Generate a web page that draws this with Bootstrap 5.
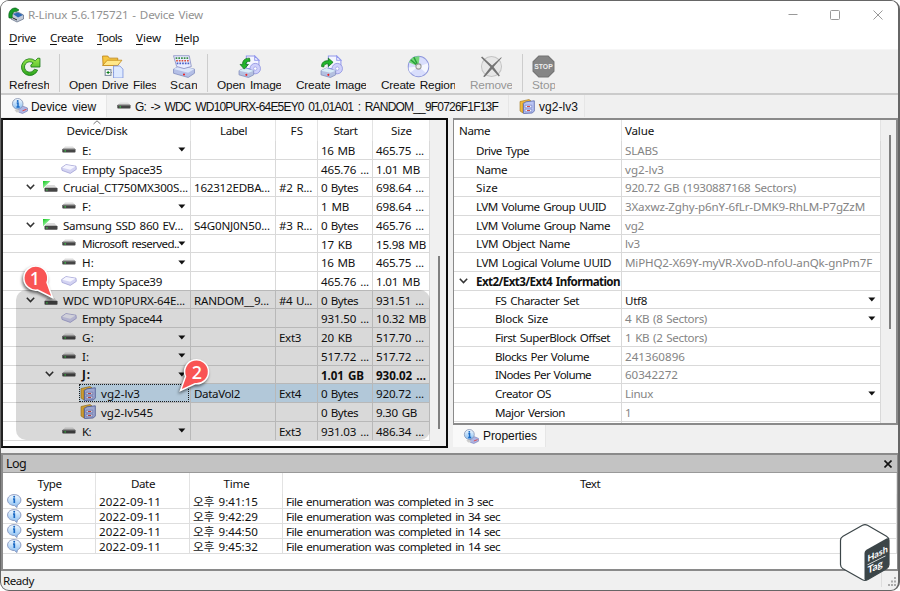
<!DOCTYPE html>
<html lang="en">
<head>
<meta charset="utf-8">
<title>R-Linux 5.6.175721 - Device View</title>
<link href="https://cdn.jsdelivr.net/npm/bootstrap@5.3.0/dist/css/bootstrap.min.css" rel="stylesheet">
<style>
body{width:900px;height:591px;overflow:hidden;background:#fff;font:11.6px/18px "Noto Sans","Noto Sans CJK KR",sans-serif;word-spacing:1.2px;color:#111}
svg{display:block;flex:none}
.t{display:inline-block;white-space:pre}
.win{width:900px;height:591px;border:1px solid #666;border-right-width:2px;border-radius:9px;background:#f0f0f0;overflow:hidden}
.titlebar{height:27px;background:#fff;padding-left:7px;color:#929292}
.titlebar svg.ms-auto{margin-right:7px}
.menus{height:21px;line-height:19px;background:#fff;padding:0 0 2px 8px;color:#111}
.menus u{text-underline-offset:2px}
.tools{height:46px;padding:5px 0 0 8px;border-top:1px solid #f6f6f6;border-bottom:2px solid #cbcbcb;font:11.8px/14px "Liberation Sans",sans-serif;word-spacing:1.5px}
.tool svg{margin:0 auto}
.tool .cap{height:14px;overflow:hidden}
.tool .cap .t{margin-top:-3px}
.vsep{width:1px;height:38px;background:#cdcdcd;margin:-1px 9px 0 10px}
.tabs2{height:23px;padding-bottom:1px;font:12px/20px "Liberation Sans",sans-serif;word-spacing:2px}
.tabs2 .t{padding-top:1px}
.tab2{background:#f2f2f2;border-right:1px solid #e6e6e6}
.tab2.on{background:#f9f9f9}
.mid{height:335px}
.pane-l{width:447px;height:330px;border:2px solid #0a0a0a;border-left-color:#222;background:#fff;position:relative}
.pane-r{width:445px;height:307px;border:2px solid #8a8a8a;border-left-width:1px;background:#fff}
.hd{height:21px;line-height:21px}
.tr2{height:18.72px;line-height:20px}
.tr2>div{border-bottom:1px solid #d9d9d9;border-right:1px solid #d9d9d9;padding-left:3px;overflow:hidden;white-space:nowrap}
.tr2>.align-items-center>.t{padding-top:2px}
.hd>div{border-right:1px solid #e3e3e3}
.tree .c0{width:188px}.c1{width:85px}.c2{width:42px}.c3{width:55px}.c4{width:57px}
.p0{width:168px}.p1{width:259px}
.tr2>.p0{padding-left:0}
.sel>div{background:#d2ecff}
.sel>.c0{background:linear-gradient(90deg,#fff 76px,#d2ecff 76px);position:relative}
.sel .focusbox{position:absolute;inset:0 1px 0 76px;border:1px dotted #222}
.shade{position:absolute;left:13px;top:170px;width:414px;height:150px;border-radius:10px;background:rgba(0,0,0,.15)}
.badge2{position:absolute;overflow:visible}
.sb{background:#f0f0f0;width:16px}
.sb i{display:block;width:2px;background:#808080}
.v{color:#848484}
.log{border:2px solid #8a8a8a;border-right-width:1px;height:118px;background:#fff}
.logcap{height:18px;line-height:17px;background:#c3c3c3;border-bottom:1px solid #999;padding:0 5px 0 3px;font-size:12.5px}
.lr{height:14.95px;line-height:15px}
.lr>div{border-bottom:1px solid #dedede;border-right:1px solid #dedede;padding-left:3px;white-space:nowrap}
.lr>div:first-child{padding-left:4px}
.lh{height:21px;line-height:22px}
.lh>div{border-right:1px solid #e3e3e3;text-align:center}
.l0{width:93px}.l1{width:94px}.l2{width:93px}.l3{width:614px}
.status{height:19px;line-height:20px;padding-left:2px}
.logo{position:absolute;left:839px;top:523px}
.defs{position:absolute}
</style>
<script src="https://cdn.jsdelivr.net/npm/bootstrap@5.3.0/dist/js/bootstrap.bundle.min.js"></script>
</head>
<body>
<svg class="defs" width="0" height="0">
<defs>
<linearGradient id="gr" x2="0" y2="1"><stop stop-color="#9be84a"/><stop offset="1" stop-color="#2ba51c"/></linearGradient>
<linearGradient id="gt" x2=".7" y2="1"><stop stop-color="#10c81e"/><stop offset="1" stop-color="#d8ffd8"/></linearGradient>
<linearGradient id="bl" x2="0" y2="1"><stop stop-color="#f4faff"/><stop offset="1" stop-color="#86bdf2"/></linearGradient>
</defs>
<symbol id="hdd" viewBox="0 0 14 8"><path d="M3 .5h8l2.300 2.500H.7z" fill="#dedede"/><rect x=".3" y="2.800" width="13.200" height="3.800" rx=".8" fill="#454545"/><rect x="1" y="2.800" width="12" height="1" fill="#777"/><rect x="2.500" y="4.300" width="1.400" height="1.200" fill="#3ce04a"/></symbol>
<symbol id="disk" viewBox="0 0 15 12"><path d="M4 4h7.500l2.300 3H1.500z" fill="#dcdcdc"/><path d="M0 0h7.500L0 7.500z" fill="url(#gt)"/><rect x="1.500" y="6.700" width="13" height="4" rx=".8" fill="#454545"/><rect x="3.200" y="8.300" width="1.400" height="1.200" fill="#3ce04a"/></symbol>
<symbol id="disk0" viewBox="0 0 15 12"><path d="M4 4h7.500l2.300 3H1.500z" fill="#dcdcdc"/><rect x="1.500" y="6.700" width="13" height="4" rx=".8" fill="#454545"/><rect x="3.200" y="8.300" width="1.400" height="1.200" fill="#3ce04a"/></symbol>
<symbol id="empty" viewBox="0 0 16 10"><path d="M.6 3.600 5 .6l10 1.600.3 3.200-6 4-8.300-3z" fill="#d3d3f2" stroke="#a3a3d6" stroke-width=".8"/><path d="M1.200 3.700 5 1.100l9.400 1.400-5.200 3.200z" fill="#f6f6ff"/></symbol>
<symbol id="lv" viewBox="0 0 16 15"><path d="M1 2.500 10 .5l2 1.500-8 2v10l-3-2z" fill="#f0b83c" stroke="#a0761c" stroke-width=".6"/><path d="M4.500 4.500 7 2.800l8.300-1V12l-2 2-8.800.5z" fill="#b9c4f4" stroke="#5664a8" stroke-width=".8"/><path d="M6 6.200h6.800v2.600H6zm0 4h6.800v2.600H6z" fill="#eef1ff" stroke="#6674bc" stroke-width=".6"/><path d="M8 7.500h3M8 11.500h3" stroke="#d24b4b" stroke-width="1"/></symbol>
<symbol id="info" viewBox="0 0 16 16"><path d="M7 11l4-3 5 2v3l-5 2.500-4-1.500z" fill="#adb4e4" stroke="#6b74b2" stroke-width=".6"/><path d="M11 12.800l4-1.500" stroke="#e14444" stroke-width="1"/><path d="M3 12l4-1 1 3-3 .5z" fill="#ccc"/><circle cx="6.200" cy="5.800" r="5.300" fill="url(#bl)" stroke="#8190b0" stroke-width=".8"/><path d="M5.200 5h1.300v4M5 9h3.200" stroke="#1768c4" stroke-width="1.500" fill="none"/><circle cx="6.200" cy="3" r="1" fill="#1768c4"/></symbol>
<symbol id="bubble" viewBox="0 0 15 14"><path d="M7.200.6c3.700 0 6.700 2.300 6.700 5.400 0 2.300-1.500 4.200-3.600 5L10 13.500 7.400 11.500C3.500 11.500.6 9.200.6 6S3.500.6 7.200.6z" fill="url(#bl)" stroke="#8292bb" stroke-width=".9"/><path d="M6 5h1.300v4" stroke="#1768c4" stroke-width="1.700" fill="none"/><circle cx="7.200" cy="2.800" r="1" fill="#1768c4"/></symbol>
<symbol id="base" viewBox="0 0 22 22"><path d="M1 13.500 7 10.500 21 13.500v4L15 21.500 1 17.500z" fill="#b4bfe6" stroke="#7a86ba" stroke-width=".7"/><path d="M1 13.500 7 10.500 21 13.500 15 17z" fill="#dbe5fa"/><circle cx="11" cy="18.600" r="1" fill="#e22"/></symbol>
<symbol id="img" viewBox="0 0 22 22"><path d="M8 1h8l4 4v8H8z" fill="#f4f5ff" stroke="#9298ec"/><path d="M16 1v4h4z" fill="#fff" stroke="#9298ec"/><circle cx="16.500" cy="13" r="5" fill="#cfd0fb" stroke="#9095e0" stroke-width=".8"/><circle cx="16.500" cy="13" r="1.600" fill="#fff" stroke="#9095e0" stroke-width=".6"/><path d="M1 15 6 12.500 15 15v4L10 21.500 1 19z" fill="#b4c0e0" stroke="#7b88ba" stroke-width=".7"/><path d="M1 15l5-2.500 9 2.500-5 2z" fill="#d8edf8"/><circle cx="8" cy="19" r="1" fill="#e22"/></symbol>
</svg>

<div class="win d-flex flex-column">
  <div class="titlebar d-flex align-items-center">
    <svg width="16" height="16" viewBox="0 0 16 16"><path d="M3 7l7-2 5.500 3v4L9 15l-6-3z" fill="#c4cbd8" stroke="#59657c" stroke-width=".7"/><path d="M5 7l5-1.500L15 8l-5 2.500z" fill="#2e68b4"/><path d="M1 11C-.3 4 4 .5 8 1l3 2-2.500 1.500C5 4 3.500 7 4.500 11z" fill="#159c28" stroke="#065914" stroke-width=".6"/><path d="M5 11l4 2" stroke="#222"/></svg>
    <span class="t ms-1" data-w="174">R-Linux 5.6.175721 - Device View</span>
    <svg class="ms-auto" width="104" height="12" viewBox="0 0 104 12" fill="none" stroke="#999"><path d="M1.500 5.500h9"/><rect x="43.500" y="1.500" width="9" height="9" rx="1"/><path d="M86.500 1.500l9 9m0-9l-9 9"/></svg>
  </div>
  <div class="menus d-flex align-items-center">
    <span class="t" data-w="26"><u>D</u>rive</span><span class="t" data-w="32" data-l="15"><u>C</u>reate</span><span class="t" data-w="24" data-l="15"><u>T</u>ools</span><span class="t" data-w="24" data-l="15"><u>V</u>iew</span><span class="t" data-w="23" data-l="15"><u>H</u>elp</span>
  </div>
  <div class="tools d-flex">
    <div class="tool"><svg width="23" height="23" viewBox="0 0 22 22"><path d="M18.800 14.500A8 8 0 1 1 16.500 5.500L19 3l2 .2v8.300h-8.500l-.2-2L14.500 7.700A5 5 0 1 0 15.700 13.600z" fill="url(#gr)" stroke="#187a18" stroke-width=".8"/></svg><div class="cap"><span class="t" data-w="40">Refresh</span></div></div>
    <div class="vsep"></div>
    <div class="tool"><svg width="23" height="23" viewBox="0 0 22 22"><path d="M1.500 1h5l1.500 2h8v7h-14z" fill="#f6c742" stroke="#bd8417" stroke-width=".8"/><path d="M1.500 10 6 5h14l-4 5z" fill="#ffe88a" stroke="#c28b1b" stroke-width=".8"/><rect x="4" y="14" width="5.500" height="5.500" fill="#fff" stroke="#789"/><path d="M6.800 15.200v3M5.300 16.700h3" stroke="#087c18"/><path d="M9.500 16.700h3" stroke="#888" stroke-dasharray="1 1"/><path d="M12 10.500h6l3 3V22h-9z" fill="#dde9ff" stroke="#7d93dd" stroke-width=".8"/></svg><div class="cap"><span class="t" data-w="87">Open Drive Files</span></div></div>
    <div class="tool" data-l="14"><svg width="24" height="23" viewBox="0 0 22 22"><use href="#base"/><path d="M4 11 1 .7h15L18 11l-7 2z" fill="#e9edff" stroke="#8a90c4" stroke-width=".8"/><g stroke-width="1.600" stroke-dasharray="1.600 1"><path d="M3 3h12" stroke="#398e45"/><path d="M3.500 5.500h12" stroke="#d34b3c"/><path d="M4 8h12" stroke="#4660c8"/></g></svg><div class="cap"><span class="t" data-w="27">Scan</span></div></div>
    <div class="vsep"></div>
    <div class="tool"><svg width="23" height="23" viewBox="0 0 22 22"><use href="#img"/><path d="M11 3C6 3 4 6 4.500 9H2l4 4.500L10 9H7.500C7.500 7 9 5.800 11.500 6z" fill="#22b52b" stroke="#0a6c14" stroke-width=".7"/></svg><div class="cap"><span class="t" data-w="64">Open Image</span></div></div>
    <div class="tool" data-l="15"><svg width="23" height="23" viewBox="0 0 22 22"><use href="#img"/><path d="M1.500 11C1.500 7 4 5.300 8 5.500V3l4.500 4L8 11V8.500C5.500 8.300 4 9 3.500 11.500z" fill="#22b52b" stroke="#0a6c14" stroke-width=".7"/></svg><div class="cap"><span class="t" data-w="70">Create Image</span></div></div>
    <div class="tool" data-l="15"><svg width="23" height="23" viewBox="0 0 22 22"><circle cx="11" cy="11" r="9.800" fill="#d9defc" stroke="#8f98dc"/><path d="M11 11 20 8a10 10 0 0 1-2 9z" fill="#f5f7ff"/><path d="M11 11 3 17a10 10 0 0 1-1.500-5z" fill="#f5f7ff"/><path d="M11 11 1.800 7A10 10 0 0 1 12 1.200z" fill="#74d67a"/><path d="M11 11 3.500 4.500m7.500 6.500L6.500 2" stroke="#249e35" stroke-width="1.300"/><circle cx="11" cy="11" r="2.500" fill="#e9e9e9" stroke="#999"/></svg><div class="cap"><span class="t" data-w="74">Create Region</span></div></div>
    <div class="tool" data-l="15" style="color:#969696"><svg width="23" height="23" viewBox="0 0 22 22"><circle cx="11" cy="11" r="9.600" fill="#e7e7e7" stroke="#c4c4c4"/><path d="M2 1.500 11.500 10 20 2.500h1L13 11.500l6 8-1 1L11.500 13.500 4.500 21l-1.500-.5 7-9-9-9z" fill="#747474"/></svg><div class="cap"><span class="t" data-w="42">Remove</span></div></div>
    <div class="vsep"></div>
    <div class="tool" style="color:#969696"><svg width="23" height="23" viewBox="0 0 22 22"><path d="M6.500 1h9L21 6.500v9L15.500 21h-9L1 15.500v-9z" fill="#858585" stroke="#737373"/><text x="11" y="13.500" text-anchor="middle" font-family="Liberation Sans" font-weight="bold" font-size="6.500" fill="#eee">STOP</text></svg><div class="cap"><span class="t" data-w="23">Stop</span></div></div>
  </div>
  <div class="tabs2 d-flex">
    <div class="tab2 on d-flex align-items-center" style="width:106px;padding-left:10px"><svg width="17" height="16"><use href="#info"/></svg><span class="t" data-w="64" data-l="3">Device view</span></div>
    <div class="tab2 d-flex align-items-center" style="width:402px;padding-left:10px"><svg width="14" height="8"><use href="#hdd"/></svg><span class="t" data-w="362" data-l="4">G: -&gt; WDC WD10PURX-64E5EY0 01,01A01 : RANDOM__9F0726F1F13F</span></div>
    <div class="tab2 d-flex align-items-center" style="width:76px;padding-left:10px"><svg width="16" height="15"><use href="#lv"/></svg><span class="t" data-w="38" data-l="4">vg2-lv3</span></div>
  </div>

  <div class="mid d-flex justify-content-between">
    <div class="pane-l d-flex">
      <div class="tree" id="tree">
        <div class="hd d-flex text-center">
          <div class="c0 position-relative"><svg class="position-absolute" style="left:90px;top:0" width="8" height="5" fill="none" stroke="#777"><path d="M.5 4 4 .8 7.500 4"/></svg><span class="t" data-w="60">Device/Disk</span></div>
          <div class="c1"><span class="t" data-w="26">Label</span></div><div class="c2"><span class="t" data-w="12">FS</span></div><div class="c3"><span class="t" data-w="23">Start</span></div><div class="c4"><span class="t" data-w="20">Size</span></div>
        </div>
      </div>
      <div class="sb"><i style="height:173px;margin:136px 0 0 8px"></i></div>
      <div class="shade"></div>
      <svg class="badge2" style="left:16px;top:143px" width="40" height="40"><g style="filter:drop-shadow(-1px 2px 1.500px rgba(0,0,0,.55))"><path d="M33.500 34.500 18.500 27A12 12 0 1 1 28 19.500z" fill="#f95454" stroke="#fff" stroke-width="1.500"/></g><text x="16" y="22" text-anchor="middle" font-size="18" font-weight="500" font-family="Noto Sans" fill="#fff">1</text></svg>
      <svg class="badge2" style="left:172px;top:235px" width="44" height="44"><g style="filter:drop-shadow(-1px 2px 1.500px rgba(0,0,0,.55))"><path d="M5.500 35.500 10.500 21.500A12 12 0 1 1 20 28.700z" fill="#f95454" stroke="#fff" stroke-width="1.500"/></g><text x="22" y="23.500" text-anchor="middle" font-size="18" font-weight="500" font-family="Noto Sans" fill="#fff">2</text></svg>
    </div>
    <div class="d-flex flex-column">
      <div class="pane-r d-flex overflow-hidden">
        <div id="props">
          <div class="hd d-flex"><div class="p0" style="padding-left:5px"><span class="t" data-w="30">Name</span></div><div class="p1" style="padding-left:3px"><span class="t" data-w="28">Value</span></div></div>
        </div>
        <div class="sb flex-grow-1"><i style="height:194px;margin:15px 0 0 8px"></i></div>
      </div>
      <div class="tab2 on d-flex align-items-center" style="width:93px;height:22px;padding-left:10px;font:12px 'Liberation Sans'"><svg width="16" height="15"><use href="#info"/></svg><span class="t" data-w="53" data-l="4">Properties</span></div>
    </div>
  </div>

  <div class="log">
    <div class="logcap d-flex justify-content-between align-items-center"><span class="t" data-w="19">Log</span><svg width="8" height="8" stroke="#111" stroke-width="1.600"><path d="M.5 .5l7 7m0-7l-7 7"/></svg></div>
    <div id="log">
      <div class="lh d-flex"><div class="l0"><span class="t" data-w="23">Type</span></div><div class="l1"><span class="t" data-w="23">Date</span></div><div class="l2"><span class="t" data-w="25">Time</span></div><div class="l3"><span class="t" data-w="19">Text</span></div></div>
    </div>
  </div>
  <div class="status d-flex justify-content-between"><span class="t" data-w="30">Ready</span><svg width="17" height="18" fill="#aaa"><path d="M0 0h1v16H0z" fill="#ddd"/><path d="M13 6h2v2h-2zM10 9.500h2v2h-2zM13 9.500h2v2h-2zM7 13h2v2H7zM10 13h2v2h-2zM13 13h2v2h-2z"/></svg></div>
</div>
<svg class="logo" width="52" height="60" viewBox="0 0 52 60"><path d="M23.500 2.200q2.500-1.300 5 0l19 11q2.500 1.500 2.500 4.300v24q0 2.800-2.500 4.300l-19 11q-2.500 1.300-5 0L4 45.800q-2.500-1.500-2.500-4.300v-24q0-2.800 2.500-4.300z" fill="#fff" stroke="#3b4548" stroke-width="1.200"/><path d="M25.500 30q0-2 2-3.200L47.500 15.500q2.500-1 2.500 2v24q0 2.800-2.500 4.300l-19 11q-3 1.500-3-1.500z" fill="#3b4548"/><g transform="matrix(1 -.5 0 1 28.500 39)" fill="#fff" font-family="Lato,sans-serif" font-weight="bold"><text x="0" y="0" font-size="9">Hash</text><path d="M0 2.500h18v.7H0z"/><text x="0" y="12" font-size="10">Tag</text></g></svg>

<script>
const t = (s, w, l) => s ? `<span class="t" data-w="${w}"${l ? ` data-l="${l}"` : ''}>${s}</span>` : '';
const icon = (id, w, h) => `<svg width="${w}" height="${h}"><use href="#${id}"/></svg>`;
const chev = `<svg width="9" height="6" fill="none" stroke="#333" stroke-width="1.500"><path d="M.8 .8 4.500 4.600 8.200 .8"/></svg>`;
const tri = `<svg class="ms-auto" width="8" height="5"><path d="M.3 .5h7L3.800 4.500z" fill="#111"/></svg>`;
// kind, name, width, menu arrow, then [text, width] for label, fs, start and size
const K = {
  e: '<div style="width:56px"></div>' + icon('hdd', 14, 8),
  s: '<div style="width:55px"></div>' + icon('empty', 16, 10),
  d: `<div style="width:20px"></div>${chev}<div style="width:8px"></div>` + icon('disk', 15, 12),
  u: `<div style="width:20px"></div>${chev}<div style="width:8px"></div>` + icon('disk0', 15, 12),
  j: `<div style="width:39px"></div>${chev}<div style="width:8px"></div>` + icon('hdd', 14, 8),
  v: '<div style="width:74px"></div>' + icon('lv', 16, 15)
};
const gap = {e: 6, s: 5, d: 5, u: 5, j: 6, v: 5};
const n = [0, 0];
const rows = [
 ['e','E:',8,1,n,n,['16 MB',33],['465.75 ...',47]],
 ['s','Empty Space35',79,0,n,n,['465.76 ...',47],['1.01 MB',43]],
 ['d','Crucial_CT750MX300S...',124,0,['162312EDBA...',75],['#2 R...',32],['0 Bytes',36],['698.64 ...',47]],
 ['e','F:',8,1,n,n,['1 MB',27],['698.64 ...',47]],
 ['d','Samsung SSD 860 EV...',119,0,['S4G0NJ0N50...',75],['#3 R...',32],['0 Bytes',36],['465.76 ...',47]],
 ['e','Microsoft reserved..',96,1,n,n,['17 KB',30],['15.98 MB',49]],
 ['e','H:',11,1,n,n,['16 MB',33],['465.75 ...',47]],
 ['s','Empty Space39',79,0,n,n,['465.76 ...',47],['1.01 MB',43]],
 ['u','WDC WD10PURX-64E...',121,0,['RANDOM__9...',74],['#4 U...',32],['0 Bytes',36],['931.51 ...',47]],
 ['s','Empty Space44',79,0,n,n,['931.50 ...',47],['10.32 MB',49]],
 ['e','G:',11,1,n,['Ext3',21],['20 KB',30],['517.70 ...',47]],
 ['e','I:',6,1,n,n,['517.72 ...',47],['517.72 ...',47]],
 ['j','J:',8,1,n,n,['1.01 GB',42],['930.02 ...',49]],
 ['v','vg2-lv3',38,0,['DataVol2',45],['Ext4',21],['0 Bytes',36],['920.72 ...',47]],
 ['v','vg2-lv545',51,0,n,n,['0 Bytes',36],['9.30 GB',40]],
 ['e','K:',8,1,n,['Ext3',21],['931.03 ...',47],['486.34 ...',47]]
];
tree.insertAdjacentHTML('beforeend', rows.map(([k, name, w, m, ...c]) =>
  `<div class="tr2 d-flex ${name === 'vg2-lv3' ? 'sel' : ''} ${k === 'j' ? 'fw-bold' : ''}"><div class="c0 d-flex align-items-center">${K[k]}${t(name, w, gap[k])}${m ? tri.replace('ms-auto', name[0] === 'M' ? '' : 'ms-auto me-1') : ''}${name === 'vg2-lv3' ? '<div class="focusbox"></div>' : ''}</div>` +
  c.map(([s, cw], i) => `<div class="c${i + 1}">${t(s, cw)}</div>`).join('') + '</div>').join(''));

// indent, name, width, value, width, menu arrow
const P = [
 [22,'Drive Type',52,'SLABS',32],[22,'Name',30,'vg2-lv3',38],[22,'Size',21,'920.72 GB (1930887168 Sectors)',170],
 [22,'LVM Volume Group UUID',129,'3Xaxwz-Zghy-p6nY-6fLr-DMK9-RhLM-P7gZzM',239],[22,'LVM Volume Group Name',133,'vg2',18],
 [22,'LVM Object Name',93,'lv3',14],[22,'LVM Logical Volume UUID',134,'MiPHQ2-X69Y-myVR-XvoD-nfoU-anQk-gnPm7F',246],
 [0,'Ext2/Ext3/Ext4 Information',143,'',0],[41,'FS Character Set',83,'Utf8',21,1],[41,'Block Size',52,'4 KB (8 Sectors)',81,1],
 [41,'First SuperBlock Offset',114,'1 KB (2 Sectors)',81],[41,'Blocks Per Volume',93,'241360896',59],[41,'INodes Per Volume',95,'60342272',52],
 [41,'Creator OS',55,'Linux',27,1],[41,'Major Version',69,'1',6],[0,'',0,'',0]
];
props.insertAdjacentHTML('beforeend', P.map(([i, a, w, b, v, m]) =>
  `<div class="tr2 d-flex"><div class="p0 d-flex align-items-center ${!i ? 'fw-bold' : ''}">${!i && a ? '<div style="width:5px"></div>' + chev : ''}${t(a, w, i || 8)}</div><div class="p1 d-flex align-items-center ${b === 'Utf8' ? '' : 'v'}">${t(b, v)}${m ? tri.replace('ms-auto', 'ms-auto me-1') : ''}</div></div>`).join(''));

log.insertAdjacentHTML('beforeend', [['9:41:15', 3, 206], ['9:42:29', 34, 213], ['9:44:50', 14, 213], ['9:45:32', 14, 213]].map(([h, s, w]) =>
  `<div class="lr d-flex"><div class="l0 d-flex">${icon('bubble', 15, 14)}${t('System', 36, 4)}</div><div class="l1">${t('2022-09-11', 61)}</div><div class="l2">${t('오후 ' + h, 64)}</div><div class="l3">${t(`File enumeration was completed in ${s} sec`, w)}</div></div>`).join(''));

// set each label's tracking so that it fills its nominal width
document.querySelectorAll('[data-l]').forEach(e => e.style.marginLeft = e.dataset.l + 'px');
document.querySelectorAll('.t').forEach(e => {
  const w = +e.dataset.w + 1, len = e.textContent.length;
  e.style.letterSpacing = (w - e.getBoundingClientRect().width) / len + 'px';
  e.style.marginRight = '-1px';
});
</script>
</body>
</html>
